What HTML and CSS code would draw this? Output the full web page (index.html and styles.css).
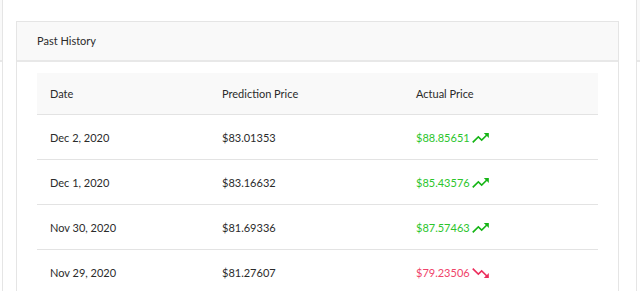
FILE: index.html
```html
<!DOCTYPE html>
<html>
<head>
<meta charset="utf-8">
<link rel="stylesheet" href="styles.css">
</head>
<body>
<div class="track">
  <div class="card card-side card-left">
    <div class="card-header card-header-tall"></div>
    <div class="card-body card-body-empty"></div>
  </div>
  <div class="card card-main">
    <div class="card-header">Past History</div>
    <div class="card-body">
      <table class="history">
        <thead>
          <tr><th class="c1">Date</th><th class="c2">Prediction Price</th><th class="c3">Actual Price</th></tr>
        </thead>
        <tbody>
          <tr><td>Dec 2, 2020</td><td>$83.01353</td><td><span class="up">$88.85651 <svg class="trend" viewBox="2 6 20 12" width="17" height="10"><path d="M16 6l2.29 2.29-4.88 4.88-4-4L2 16.590 3.41 18l6-6 4 4 6.3-6.29L22 12V6z"/></svg></span></td></tr>
          <tr><td>Dec 1, 2020</td><td>$83.16632</td><td><span class="up">$85.43576 <svg class="trend" viewBox="2 6 20 12" width="17" height="10"><path d="M16 6l2.29 2.29-4.88 4.88-4-4L2 16.590 3.41 18l6-6 4 4 6.3-6.29L22 12V6z"/></svg></span></td></tr>
          <tr><td>Nov 30, 2020</td><td>$81.69336</td><td><span class="up">$87.57463 <svg class="trend" viewBox="2 6 20 12" width="17" height="10"><path d="M16 6l2.29 2.29-4.88 4.88-4-4L2 16.590 3.41 18l6-6 4 4 6.3-6.29L22 12V6z"/></svg></span></td></tr>
          <tr><td>Nov 29, 2020</td><td>$81.27607</td><td><span class="down">$79.23506 <svg class="trend" viewBox="2 6 20 12" width="17" height="10"><path d="M16 18l2.29-2.29-4.88-4.88-4 4L2 7.41 3.41 6l6 6 4-4 6.3 6.29L22 12v6z"/></svg></span></td></tr>
        </tbody>
      </table>
    </div>
  </div>
  <div class="card card-side card-right">
    <div class="card-header card-header-tall"></div>
    <div class="card-body card-body-empty"></div>
  </div>
</div>
</body>
</html>
```
FILE: styles.css
```css
html, body {
  margin: 0;
  padding: 0;
  background: #ffffff;
  overflow: hidden;
}
body {
  font-family: Lato, "Open Sans", Arial, sans-serif;
  font-size: 11px;
  color: #2b2b2b;
}
.track {
  display: flex;
  align-items: flex-start;
  margin-left: -97px;
  width: 1000px;
}
.card {
  border: 1px solid #e5e5e5;
  background: #ffffff;
  box-sizing: border-box;
  flex: none;
}
.card-left {
  width: 100px;
  margin-top: -20px;
  margin-right: 13px;
}
.card-main {
  width: 603px;
  margin-top: 21px;
}
.card-right {
  width: 200px;
  margin-top: -20px;
  margin-left: 17px;
}
.card-header {
  background: #f9f9f9;
  border-bottom: 2px solid #e8e8e8;
  height: 38px;
  line-height: 37px;
  padding: 0 20px;
  font-size: 11px;
  color: #2b2b2b;
}
.card-header-tall {
  height: 79px;
}
.card-body {
  padding: 11px 20px 20px;
}
.card-body-empty {
  height: 400px;
}
.history {
  width: 561px;
  border-collapse: collapse;
  table-layout: fixed;
}
.history th {
  background: #f9f9f9;
  font-weight: normal;
  text-align: left;
  height: 41px;
  padding: 0 0 0 13px;
  border-bottom: 1px solid #e3e3e3;
  color: #2b2b2b;
}
.history .c1 { width: 159px; }
.history .c2 { width: 181px; }
.history td {
  height: 44px;
  padding: 0 0 0 13px;
  border-bottom: 1px solid #e3e3e3;
  color: #2b2b2b;
}
.up { color: #2cc52c; }
.down { color: #f0436a; }
.trend {
  fill: currentColor;
  vertical-align: -1px;
  margin-left: 0;
}
.up .trend { fill: #15b515; }
.down .trend { fill: #ec2d5c; }
```
